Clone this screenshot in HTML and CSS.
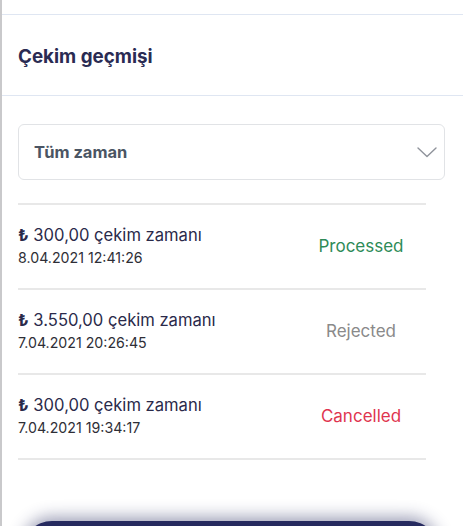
FILE: index.html
```html
<!DOCTYPE html>
<html lang="tr">
<head>
<meta charset="utf-8">
<link rel="stylesheet" href="styles.css">
</head>
<body>
<div class="page">
  <div class="top-gap"></div>
  <header class="header">
    <h1 class="title">Çekim geçmişi</h1>
  </header>
  <main class="content">
    <div class="select">
      <span class="select-label">Tüm zaman</span>
      <svg class="chevron" width="20" height="11" viewBox="0 0 20 11"><path d="M1 1 L10 9.5 L19 1" fill="none" stroke="#8f939b" stroke-width="1.4" stroke-linecap="round" stroke-linejoin="round"/></svg>
    </div>
    <ul class="list">
      <li class="row">
        <div class="info">
          <div class="amount"><span class="lira">₺</span> 300,00 çekim zamanı</div>
          <div class="date">8.04.2021 12:41:26</div>
        </div>
        <div class="status processed">Processed</div>
      </li>
      <li class="row">
        <div class="info">
          <div class="amount"><span class="lira">₺</span> 3.550,00 çekim zamanı</div>
          <div class="date">7.04.2021 20:26:45</div>
        </div>
        <div class="status rejected">Rejected</div>
      </li>
      <li class="row">
        <div class="info">
          <div class="amount"><span class="lira">₺</span> 300,00 çekim zamanı</div>
          <div class="date">7.04.2021 19:34:17</div>
        </div>
        <div class="status cancelled">Cancelled</div>
      </li>
    </ul>
    <div class="button-wrap">
      <div class="button"></div>
    </div>
  </main>
</div>
</body>
</html>
```
FILE: styles.css
```css
html, body {
  margin: 0;
  padding: 0;
  background: #ffffff;
}
body {
  font-family: "Inter", "Noto Sans", "DejaVu Sans", sans-serif;
  width: 463px;
  height: 526px;
  overflow: hidden;
}
.page {
  height: 526px;
  border-left: 2px solid #c9c9cb;
  box-sizing: border-box;
  overflow: hidden;
}
.top-gap {
  height: 14px;
  border-bottom: 1.5px solid #dfe6f2;
}
.header {
  height: 80px;
  display: flex;
  align-items: center;
  padding-left: 16px;
  border-bottom: 1.5px solid #dfe6f2;
}
.title {
  margin: 0 0 -2px;
  font-size: 18.8px;
  font-weight: 700;
  color: #2a2b53;
}
.content {
  padding: 28px 18px 0 16px;
}
.select {
  height: 54px;
  border: 1px solid #e1e3e6;
  border-radius: 6px;
  display: flex;
  align-items: center;
  justify-content: space-between;
  padding: 0 7px 0 15px;
}
.select-label {
  font-size: 16.5px;
  font-weight: 700;
  color: #4b5563;
}
.chevron {
  display: block;
}
.list {
  list-style: none;
  margin: 23px 19px 0 0;
  padding: 0;
  border-top: 2px solid #e8e8e8;
}
.row {
  height: 83px;
  border-bottom: 2px solid #e8e8e8;
  display: flex;
  align-items: center;
}
.info {
  flex: 1;
  display: flex;
  flex-direction: column;
  gap: 3px;
  margin-top: -2px;
}
.amount {
  font-size: 16.6px;
  line-height: 21px;
  color: #2a2a4a;
}
.lira {
  font-weight: 700;
}
.date {
  font-size: 14.2px;
  line-height: 18px;
  color: #2e2e36;
}
.status {
  width: 130px;
  text-align: center;
  font-size: 17px;
  margin-top: -2px;
}
.processed { color: #2e8b57; }
.rejected { color: #8a8a8a; }
.cancelled { color: #e0354f; }
.button-wrap {
  padding: 61px 6px 0 4px;
}
.button {
  height: 60px;
  background: #262a5f;
  border-radius: 30px;
  box-shadow: 0 -4px 16px rgba(38, 42, 95, 0.45);
}
```
